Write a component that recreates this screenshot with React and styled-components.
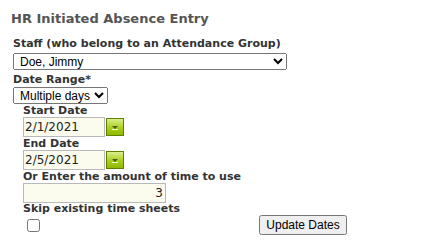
import styled, { createGlobalStyle } from "styled-components";

const Global = createGlobalStyle`
	body {
		margin: 0;
		background: #fff;
		font-family: "DejaVu Sans", Verdana, sans-serif;
	}
`

const Page = styled.div`
	padding: 11px 0 0 11px;
`

const Title = styled.h2`
	margin: 0 0 11px;
	font-size: 13px;
	line-height: 16px;
	font-weight: bold;
	color: #555;
`

const Form = styled.div`
	padding-left: 2px;
	display: flex;
	flex-direction: column;
	align-items: flex-start;
`

const Label = styled.div`
	font-size: 11px;
	line-height: 12px;
	font-weight: bold;
	color: #333;
	margin-top: ${({$top}) => $top || 0}px;
`

const Select = styled.select`
	font-family: "Liberation Sans", Arial, sans-serif;
	font-size: 12px;
	height: 17px;
	width: ${({$w}) => $w}px;
	padding: 0 0 0 2px;
	margin: ${({$top}) => $top || 0}px 0 0;
	color: #000;
	box-sizing: border-box;
`

const Indent = styled.div`
	padding-left: 10px;
	display: flex;
	flex-direction: column;
	align-items: flex-start;
`

const Field = styled.div`
	display: flex;
	align-items: center;
	height: 20px;
`

const TextBox = styled.input`
	box-sizing: border-box;
	height: 20px;
	width: ${({$w}) => $w}px;
	margin: 0;
	padding: 0 2px 0 1px;
	border: 1px solid #b9b9b9;
	background: #fbfbee;
	font-family: "DejaVu Sans", Verdana, sans-serif;
	font-size: 12px;
	color: #222;
	text-align: ${({$align}) => $align || "left"};
	outline: none;
`

const Picker = styled.button`
	box-sizing: border-box;
	width: 18px;
	height: 18px;
	margin: 0 0 0 1px;
	padding: 0;
	border: 1px solid #5f7f00;
	background: linear-gradient(#dcef8c, #a9cf1c 55%, #8fb800);
	display: flex;
	align-items: center;
	justify-content: center;
	&::after {
		content: "";
		border-left: 3px solid transparent;
		border-right: 3px solid transparent;
		border-top: 3px solid #4a5a20;
		box-shadow: 0 1px 0 #f0f8d0;
	}
`

const Row = styled.div`
	display: flex;
	justify-content: space-between;
	align-items: flex-start;
	width: 324px;
`

const Check = styled.input`
	width: 13px;
	height: 13px;
	margin: 4px 0 0 4px;
`

const Button = styled.button`
	font-family: "Liberation Sans", Arial, sans-serif;
	font-size: 12px;
	height: 20px;
	width: 88px;
	padding: 0;
	color: #000;
`

function DateField({value}) {
	return <Field>
		<TextBox $w={82} defaultValue={value}/>
		<Picker type="button"/>
	</Field>
}

export default function App() {
	return <Page>
		<Global/>
		<Title>HR Initiated Absence Entry</Title>
		<Form>
			<Label>Staff (who belong to an Attendance Group)</Label>
			<Select $w={274} $top={3} defaultValue="doe">
				<option value="doe">Doe, Jimmy</option>
			</Select>
			<Label $top={4}>Date Range*</Label>
			<Select $w={95} $top={1} defaultValue="multi">
				<option value="multi">Multiple days</option>
			</Select>
			<Indent>
				<Label $top={1}>Start Date</Label>
				<DateField value="2/1/2021"/>
				<Label $top={1}>End Date</Label>
				<DateField value="2/5/2021"/>
				<Label $top={1}>Or Enter the amount of time to use</Label>
				<TextBox $w={143} $align="right" defaultValue="3"/>
				<Label>Skip existing time sheets</Label>
				<Row>
					<Check type="checkbox"/>
					<Button type="button">Update Dates</Button>
				</Row>
			</Indent>
		</Form>
	</Page>
}
